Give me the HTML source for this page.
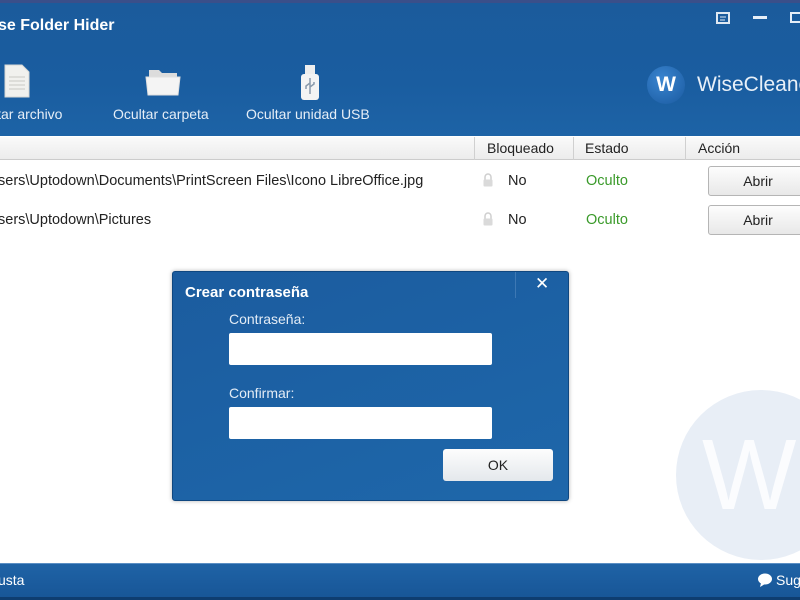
<!DOCTYPE html>
<html><head><meta charset="utf-8">
<style>
*{margin:0;padding:0;box-sizing:border-box}
body{width:800px;height:600px;overflow:hidden;background:#fff;font-family:"Liberation Sans","DejaVu Sans",sans-serif;position:relative}
.top{position:absolute;left:0;top:0;width:800px;height:136px;background:linear-gradient(180deg,#1b5b9c 0%,#1a5da0 60%,#1d63a6 100%);border-top:3px solid #3a4f8a}
.title{position:absolute;left:-2px;top:14px;color:#fff;font-weight:bold;font-size:16px}
.tb{position:absolute;color:#e6eef7;font-size:14px;top:103px;white-space:nowrap}
.wm{position:absolute;left:760px;top:475px}
.hdr{position:absolute;left:0;top:137px;width:800px;height:23px;background:linear-gradient(#fafafa,#ececec);border-bottom:1px solid #ccc;font-size:14px;color:#222}
.hdr span{position:absolute;top:3px}
.hdr i{position:absolute;top:0;height:23px;border-left:1px solid #d0d0d0}
.row{position:absolute;left:0;font-size:14.5px;color:#222;width:800px;white-space:nowrap}
.row span{position:absolute}
.btn{position:absolute;left:708px;width:100px;height:30px;border:1px solid #b5b5b5;border-radius:3px;background:linear-gradient(#fdfdfd,#e8e8e8);text-align:center;line-height:28px;font-size:14px;color:#222}
.foot{position:absolute;left:0;top:563px;width:800px;height:37px;background:linear-gradient(180deg,#1f63a6,#175596);border-top:1px solid #5b8fc4}
.foot .b{position:absolute;left:0;bottom:0;width:800px;height:3px;background:#0e3d70}
.dlg{position:absolute;left:172px;top:271px;width:397px;height:230px;background:linear-gradient(160deg,#1b5c9f,#1e67aa);border:1px solid #0f4780;border-radius:3px;box-shadow:0 0 4px rgba(0,0,0,.3)}
.dlg .t{position:absolute;left:12px;top:12px;color:#fff;font-weight:bold;font-size:15px}
.dlg .l{position:absolute;left:56px;color:#e3ecf6;font-size:14px}
.dlg .in{position:absolute;left:56px;width:263px;height:32px;background:#fff;border-radius:2px}
.dlg .ok{position:absolute;left:270px;top:177px;width:110px;height:32px;background:linear-gradient(#fdfdfd,#e4e8ec);border-radius:3px;text-align:center;line-height:32px;font-size:14px;color:#222}
</style></head><body>
<div class="top">
  <div class="title">se Folder Hider</div>
  <svg style="position:absolute;left:716px;top:9px" width="16" height="13"><rect x="1" y="1" width="12" height="10" fill="none" stroke="#dfe8f2" stroke-width="2"/><line x1="4" y1="5" x2="10" y2="5" stroke="#dfe8f2"/><line x1="4" y1="8" x2="9" y2="8" stroke="#dfe8f2"/></svg>
  <div style="position:absolute;left:753px;top:13px;width:14px;height:3px;background:#e6eef7"></div>
  <div style="position:absolute;left:790px;top:9px;width:14px;height:11px;border:2px solid #e6eef7"></div>
  <svg style="position:absolute;left:3px;top:60px" width="28" height="36"><path d="M2 2h17l7 7v25H2z" fill="#f1f1ee" stroke="#d8d8d4"/><g stroke="#c9c9c4"><line x1="6" y1="14" x2="22" y2="14"/><line x1="6" y1="18" x2="22" y2="18"/><line x1="6" y1="22" x2="22" y2="22"/><line x1="6" y1="26" x2="22" y2="26"/></g></svg>
  <svg style="position:absolute;left:145px;top:63px" width="36" height="32"><path d="M4 4h10l3 3h15v5H4z" fill="#dcdcdc"/><path d="M1 11h34l-2 18H3z" fill="#f4f4f4" stroke="#e0e0e0"/></svg>
  <svg style="position:absolute;left:296px;top:60px" width="28" height="40"><rect x="9" y="2" width="10" height="9" fill="#eee"/><rect x="5" y="11" width="18" height="26" rx="3" fill="#f4f4f4"/><path d="M14 15v16M14 20l-4 3v3M14 24l4-3v-2" stroke="#8a9aab" stroke-width="1.5" fill="none"/></svg>
  <div class="tb" style="left:-6px">ltar archivo</div>
  <div class="tb" style="left:113px">Ocultar carpeta</div>
  <div class="tb" style="left:246px">Ocultar unidad USB</div>
  <div style="position:absolute;left:647px;top:63px;width:38px;height:38px;border-radius:50%;background:radial-gradient(circle at 40% 35%,#3a85d0,#1a5aa0);color:#fff;font-size:21px;font-weight:bold;text-align:center;line-height:38px">W</div>
  <div style="position:absolute;left:697px;top:70px;color:#e8f0f8;font-size:21px;white-space:nowrap">WiseCleaner</div>
</div>
<div class="wm"><div style="position:absolute;left:-84px;top:-85px;width:170px;height:170px;border-radius:50%;background:#e8eef6"></div><div style="position:absolute;left:-58px;top:-50px;color:#fbfcfe;font-size:100px;line-height:100px">W</div></div>
<div class="hdr">
  <i style="left:474px"></i><i style="left:573px"></i><i style="left:685px"></i>
  <span style="left:487px">Bloqueado</span><span style="left:585px">Estado</span><span style="left:698px">Acción</span>
</div>
<div class="row" style="top:173px">
  <span style="left:-2px">sers\Uptodown\Documents\PrintScreen Files\Icono LibreOffice.jpg</span>
  <svg style="position:absolute;left:482px;top:0" width="12" height="14"><path d="M3 7V4a3 3 0 0 1 6 0v3" fill="none" stroke="#cfcfcf" stroke-width="1.5"/><rect x="1.5" y="6.5" width="9" height="7" rx="1" fill="#dadada"/></svg>
  <span style="left:508px">No</span><span style="left:586px;color:#3a9a2a">Oculto</span>
</div>
<div class="btn" style="top:166px">Abrir</div>
<div class="row" style="top:212px">
  <span style="left:-2px">sers\Uptodown\Pictures</span>
  <svg style="position:absolute;left:482px;top:0" width="12" height="14"><path d="M3 7V4a3 3 0 0 1 6 0v3" fill="none" stroke="#cfcfcf" stroke-width="1.5"/><rect x="1.5" y="6.5" width="9" height="7" rx="1" fill="#dadada"/></svg>
  <span style="left:508px">No</span><span style="left:586px;color:#3a9a2a">Oculto</span>
</div>
<div class="btn" style="top:205px">Abrir</div>
<div class="dlg">
  <div style="position:absolute;left:342px;top:0;width:54px;height:26px;border-left:1px solid #3d78b4"></div>
  <div style="position:absolute;left:362px;top:2px;color:#fff;font-weight:bold;font-size:17px">✕</div>
  <div class="t">Crear contraseña</div>
  <div class="l" style="top:39px">Contraseña:</div>
  <div class="in" style="top:61px"></div>
  <div class="l" style="top:113px">Confirmar:</div>
  <div class="in" style="top:135px"></div>
  <div class="ok">OK</div>
</div>
<div class="foot">
  <div style="position:absolute;left:-2px;top:8px;color:#fff;font-size:14px">usta</div>
  <svg style="position:absolute;left:757px;top:8px" width="16" height="16"><ellipse cx="8" cy="7" rx="7" ry="5.5" fill="#fff"/><path d="M4 11l-1 4 5-3z" fill="#fff"/></svg>
  <div style="position:absolute;left:776px;top:8px;color:#fff;font-size:14px;white-space:nowrap">Sug</div>
  <div class="b"></div>
</div>
</body></html>
